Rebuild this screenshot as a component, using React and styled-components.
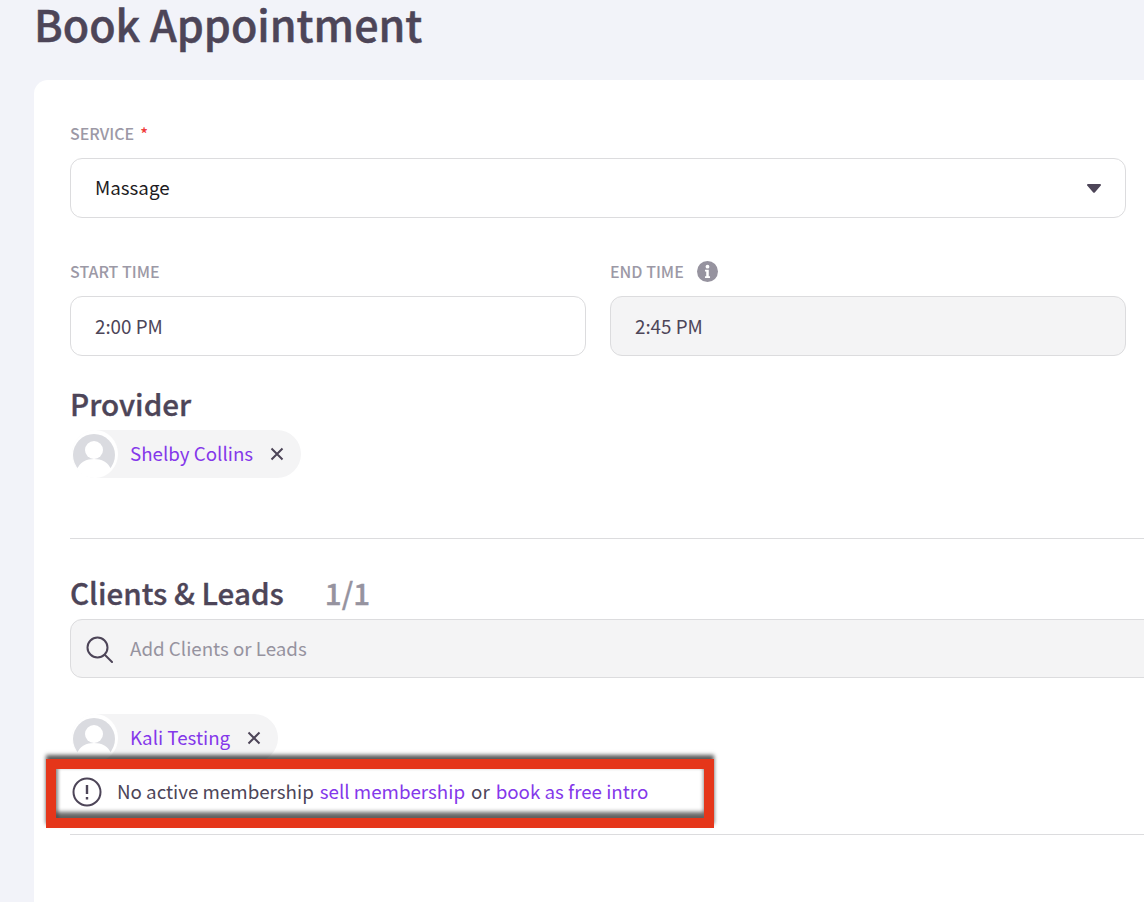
import React from 'react';
import styled, { createGlobalStyle } from 'styled-components';

const GlobalStyle = createGlobalStyle`
  html, body {
    margin: 0;
    padding: 0;
    height: 902px;
    overflow: hidden;
    background: #f2f3f9;
    font-family: "Noto Sans CJK SC", "Noto Sans", sans-serif;
  }
`;

const Avatar = () => (
  <AvatarRing>
    <svg width="42" height="44" viewBox="0 0 42 44">
      <circle cx="21" cy="22" r="21" fill="#dadbe0" />
      <circle cx="21" cy="17" r="9" fill="#fff" />
      <path d="M4 37c2-8 10-11 17-11s15 3 17 11c-4 5-10 7-17 7S8 42 4 37z" fill="#fff" />
    </svg>
  </AvatarRing>
);

const Chip = ({ name }) => (
  <ChipBox>
    <Avatar />
    <ChipName>{name}</ChipName>
    <svg width="14" height="14" viewBox="0 0 14 14">
      <path d="M1.5 1.5l11 11M12.5 1.5l-11 11" stroke="#4d4558" strokeWidth="2" />
    </svg>
  </ChipBox>
);

export default function App() {
  return (
    <Page>
      <GlobalStyle />
      <Title>Book Appointment</Title>
      <Card>
        <Fields>
          <Label>SERVICE <Required>*</Required></Label>
          <Select>
            Massage
            <svg width="14" height="9" viewBox="0 0 14 9">
              <path d="M1 0h12a1 1 0 0 1 .8 1.6L8 8.2a1.3 1.3 0 0 1-2 0L.2 1.6A1 1 0 0 1 1 0z" fill="#4d4558" />
            </svg>
          </Select>
          <TimeRow>
            <div>
              <Label>START TIME</Label>
              <TimeInput>2:00 PM</TimeInput>
            </div>
            <div>
              <Label>
                END TIME
                <svg width="21" height="21" viewBox="0 0 20 20">
                  <circle cx="10" cy="10" r="10" fill="#96939f" />
                  <circle cx="10" cy="5.4" r="1.8" fill="#fff" />
                  <path d="M7.6 8.4h3.6v6.2h1.2v1.6H7.6v-1.6h1.2V10H7.6z" fill="#fff" />
                </svg>
              </Label>
              <TimeInput disabled>2:45 PM</TimeInput>
            </div>
          </TimeRow>
        </Fields>

        <ProviderHeading>Provider</ProviderHeading>
        <Chip name="Shelby Collins" />
        <Divider />

        <ClientsHead>
          <Heading>Clients &amp; Leads</Heading>
          <Count>1/1</Count>
        </ClientsHead>
        <SearchBox>
          <svg width="28" height="28" viewBox="0 0 28 28" fill="none" stroke="#4d4558" strokeWidth="2">
            <circle cx="12.5" cy="12.5" r="10" />
            <path d="M20 20l7 7" strokeLinecap="round" />
          </svg>
          Add Clients or Leads
        </SearchBox>

        <ClientRow>
          <Chip name="Kali Testing" />
          <Callout>
            <svg width="30" height="30" viewBox="0 0 30 30" fill="none" stroke="#4d4558" strokeWidth="2">
              <circle cx="15" cy="15" r="13.5" />
              <path d="M15 8v9M15 20v2.5" strokeWidth="2.4" />
            </svg>
            <span>No active membership</span>
            <Link>sell membership</Link>
            <span>or</span>
            <Link>book as free intro</Link>
          </Callout>
        </ClientRow>
        <LastDivider />
      </Card>
    </Page>
  );
}

const Page = styled.div`
  width: 1144px;
  height: 902px;
  overflow: hidden;
  padding-left: 34px;
  box-sizing: border-box;
`;

const Title = styled.h1`
  margin: 0;
  height: 80px;
  font-size: 43px;
  line-height: 46px;
  font-weight: 500;
  -webkit-text-stroke: 0.5px #4d4558;
  color: #4d4558;
`;

const Card = styled.div`
  width: 1200px;
  height: 900px;
  padding: 44px 0 0 36px;
  box-sizing: border-box;
  background: #fff;
  border-radius: 14px 0 0 0;
`;

const Fields = styled.div`
  width: 1056px;
`;

const Label = styled.div`
  display: flex;
  align-items: center;
  gap: 6px;
  height: 20px;
  padding-bottom: 2px;
  box-sizing: border-box;
  margin-bottom: 14px;
  font-size: 16px;
  line-height: 18px;
  font-weight: 500;
  color: #9c99a6;
  svg {
    margin-left: 7px;
    flex: none;
  }
`;

const Required = styled.span`
  color: #f03a3a;
`;

const InputBox = styled.div`
  display: flex;
  align-items: center;
  height: 60px;
  padding: 0 24px 3px;
  box-sizing: border-box;
  border: 1px solid #dcdcde;
  border-radius: 12px;
  font-size: 18.75px;
`;

const Select = styled(InputBox)`
  justify-content: space-between;
  color: #1d1b22;
  svg {
    margin-top: 3px;
  }
`;

const TimeRow = styled.div`
  display: grid;
  grid-template-columns: 1fr 1fr;
  gap: 24px;
  margin-top: 44px;
`;

const TimeInput = styled(InputBox)`
  padding-bottom: 1px;
  color: #4d4558;
  background: ${props => (props.disabled ? '#f4f4f5' : '#fff')};
`;

const Heading = styled.h2`
  margin: 0;
  font-size: 29.6px;
  line-height: 40px;
  font-weight: 500;
  -webkit-text-stroke: 0.35px #4d4558;
  color: #4d4558;
`;

const ProviderHeading = styled(Heading)`
  margin: 28px 0 6px;
`;

const ChipBox = styled.div`
  display: flex;
  align-items: center;
  width: fit-content;
  height: 48px;
  margin: 0 0 0 2px;
  padding-right: 17px;
  border-radius: 24px;
  background: #f4f4f5;
  svg:last-child {
    flex: none;
  }
`;

const AvatarRing = styled.div`
  display: flex;
  width: 46px;
  height: 48px;
  margin-right: 12px;
  border-radius: 50%;
  background: #fff;
  align-items: flex-end;
  justify-content: center;
  overflow: hidden;
  box-sizing: border-box;
  padding: 0 3px 1px 1px;
`;

const ChipName = styled.span`
  margin-right: 17px;
  padding-bottom: 3px;
  font-size: 18.75px;
  color: #8438ea;
`;

const Divider = styled.div`
  height: 1px;
  margin-top: 60px;
  background: #dcdcde;
`;

const ClientsHead = styled.div`
  display: flex;
  align-items: center;
  gap: 41px;
  margin-top: 34px;
`;

const Count = styled.span`
  font-size: 29.6px;
  font-weight: 500;
  line-height: 40px;
  -webkit-text-stroke: 0.35px #96939f;
  color: #96939f;
`;

const SearchBox = styled.div`
  display: flex;
  align-items: center;
  gap: 17px;
  height: 59px;
  margin-top: 6px;
  padding: 0 0 2px 14px;
  border: 1px solid #dcdcde;
  border-radius: 12px;
  background: #f4f4f5;
  box-sizing: border-box;
  font-size: 18.75px;
  color: #96939f;
  svg {
    margin-top: 2px;
  }
`;

const ClientRow = styled.div`
  position: relative;
  height: 120px;
  margin-top: 36px;
`;

const Callout = styled.div`
  position: absolute;
  left: -24px;
  top: 45px;
  display: flex;
  align-items: center;
  gap: 6px;
  width: 668px;
  height: 69px;
  padding: 0 0 7px 16px;
  box-sizing: border-box;
  border: 10px solid #e5361a;
  background: #fff;
  font-size: 18.75px;
  color: #4d4558;
  box-shadow: 0 -4px 4px rgba(0, 0, 0, 0.65), inset 0 -6px 4px rgba(0, 0, 0, 0.6), inset 3px 0 3px rgba(0, 0, 0, 0.2);
  svg {
    margin: 3px 9px 0 0;
  }
`;

const Link = styled.span`
  color: #8438ea;
`;

const LastDivider = styled(Divider)`
  margin-top: 0;
`;
